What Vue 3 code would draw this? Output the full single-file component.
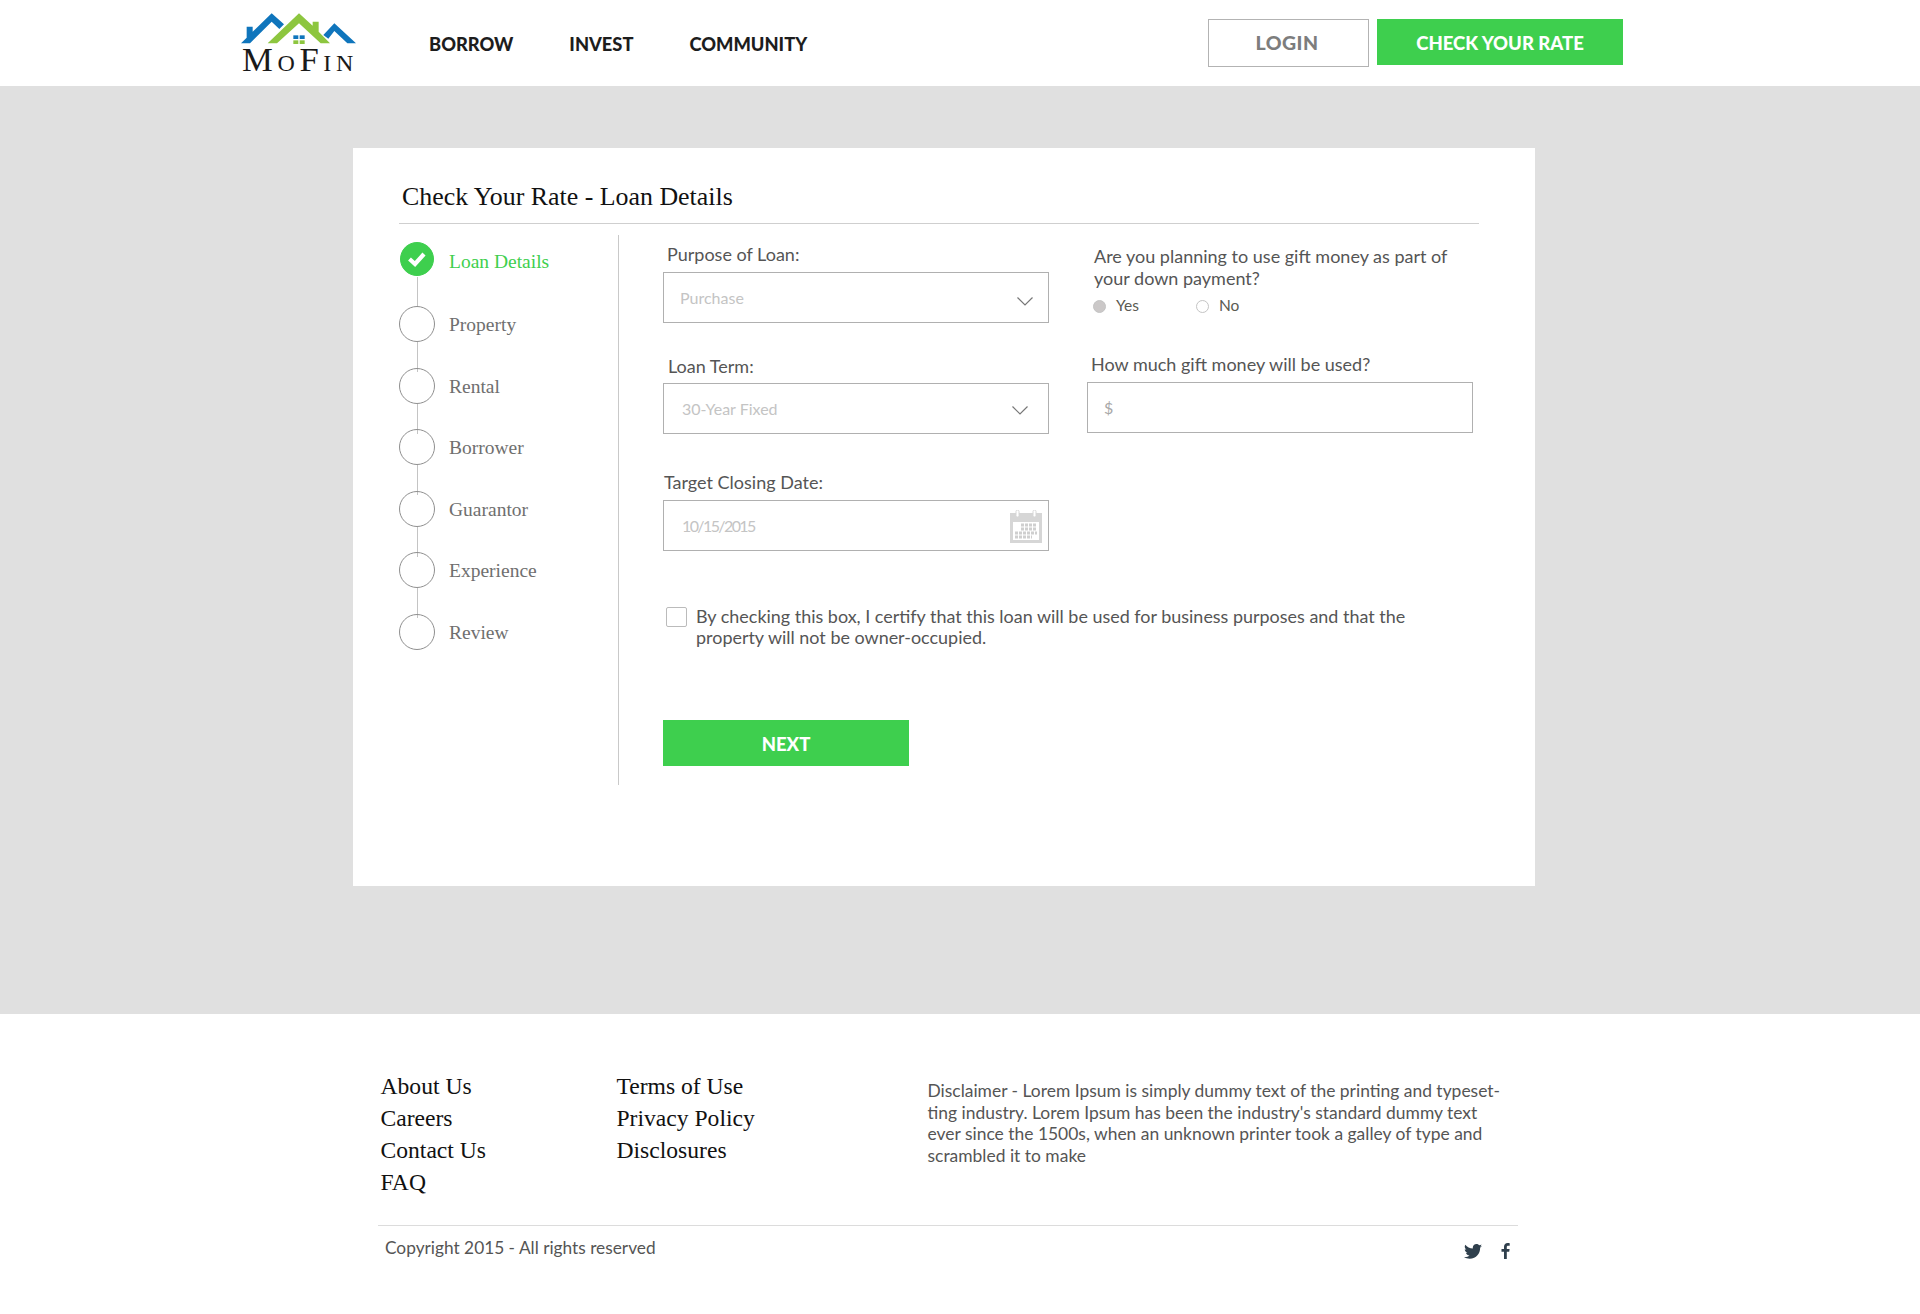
<script setup>
const nav = ['BORROW', 'INVEST', 'COMMUNITY'];

const steps = ['Loan Details', 'Property', 'Rental', 'Borrower', 'Guarantor', 'Experience', 'Review'];

const links1 = ['About Us', 'Careers', 'Contact Us', 'FAQ'];
const links2 = ['Terms of Use', 'Privacy Policy', 'Disclosures'];
</script>

<template>
  <div class="page">
    <header class="top">
      <a class="logo">
        <svg width="140" height="75" viewBox="0 0 420 225">
          <polygon fill="#0f75bc" points="33,115 50,98 50,65 68,65 68,80 125,25 162,58 148,72 125,50 60,115" />
          <polygon fill="#8dc63f" points="113,115 207,25 248,62 248,50 266,50 266,80 300,115 272,115 207,55 141,115" />
          <polygon fill="#0f75bc" points="280,90 313,55 378,115 352,115 313,78 295,101" />
          <rect x="190" y="91" width="15" height="11" fill="#0f75bc" />
          <rect x="209" y="91" width="15" height="11" fill="#0f75bc" />
          <rect x="190" y="106" width="15" height="11" fill="#8dc63f" />
          <rect x="209" y="106" width="15" height="11" fill="#8dc63f" />
          <text x="36" y="199" class="logo-text" textLength="334">MoFin</text>
        </svg>
      </a>
      <nav class="nav">
        <a v-for="item in nav" :key="item">{{ item }}</a>
      </nav>
      <div class="actions">
        <button class="login">LOGIN</button>
        <button class="rate">CHECK YOUR RATE</button>
      </div>
    </header>

    <main class="main">
      <section class="card">
        <h1>Check Your Rate - Loan Details</h1>
        <div class="content">
          <ol class="steps">
            <li v-for="(step, i) in steps" :key="step" class="step" :class="{ done: i === 0 }">
              <span class="dot">
                <svg v-if="i === 0" width="18" height="16" viewBox="0 0 18 16">
                  <path d="M1.500 8 L7 13 L16 3" fill="none" stroke="#fff" stroke-width="4.200" />
                </svg>
              </span>
              <span class="step-name">{{ step }}</span>
            </li>
          </ol>

          <form class="form" @submit.prevent>
            <div class="columns">
              <div class="col">
                <label class="lbl l1">Purpose of Loan:</label>
                <div class="box">
                  <span class="val v1">Purchase</span>
                  <svg class="chev c1" width="16" height="9" viewBox="0 0 16 9">
                    <path d="M0.500 0.500 L8 8 L15.500 0.500" fill="none" stroke="#777" stroke-width="1.200" />
                  </svg>
                </div>

                <label class="lbl l2">Loan Term:</label>
                <div class="box">
                  <span class="val">30-Year Fixed</span>
                  <svg class="chev c2" width="16" height="9" viewBox="0 0 16 9">
                    <path d="M0.500 0.500 L8 8 L15.500 0.500" fill="none" stroke="#777" stroke-width="1.200" />
                  </svg>
                </div>

                <label class="lbl l3">Target Closing Date:</label>
                <div class="box">
                  <span class="val date">10/15/2015</span>
                  <svg class="cal" width="32" height="33" viewBox="0 0 32 33">
                    <rect x="0" y="3" width="32" height="30" fill="#d6d6d6" />
                    <rect x="3" y="12" width="26" height="18" fill="#fff" />
                    <rect x="6" y="0" width="3" height="7" rx="1.500" fill="#fff" stroke="#d6d6d6" />
                    <rect x="23" y="0" width="3" height="7" rx="1.500" fill="#fff" stroke="#d6d6d6" />
                    <path d="M11 15 H27 M11 19 H27 M5 23 H27 M5 27 H22" stroke="#cfcfcf" stroke-width="3" stroke-dasharray="3 1" />
                  </svg>
                </div>
              </div>

              <div class="col">
                <p class="question">Are you planning to use gift money as part of<br />your down payment?</p>
                <div class="radios">
                  <span class="radio on"></span><span class="radio-txt yes">Yes</span>
                  <span class="radio"></span><span class="radio-txt">No</span>
                </div>
                <label class="lbl l4">How much gift money will be used?</label>
                <div class="box">
                  <span class="val dollar">$</span>
                </div>
              </div>
            </div>

            <div class="certify">
              <span class="check"></span>
              <p>By checking this box, I certify that this loan will be used for business purposes and that the<br />property will not be owner-occupied.</p>
            </div>

            <button class="next" type="submit">NEXT</button>
          </form>
        </div>
      </section>
    </main>

    <footer class="foot">
      <div class="foot-top">
        <ul class="links">
          <li v-for="l in links1" :key="l">{{ l }}</li>
        </ul>
        <ul class="links second">
          <li v-for="l in links2" :key="l">{{ l }}</li>
        </ul>
        <p class="disclaimer">
          Disclaimer - Lorem Ipsum is simply dummy text of the printing and typeset-<br />
          ting industry. Lorem Ipsum has been the industry's standard dummy text<br />
          ever since the 1500s, when an unknown printer took a galley of type and<br />
          scrambled it to make
        </p>
      </div>
      <div class="foot-bottom">
        <span class="copy">Copyright 2015 - All rights reserved</span>
        <div class="social">
          <svg width="18" height="15" viewBox="0 0 24 20">
            <path fill="#2f3f4c" d="M24 2.400c-.9.4-1.800.7-2.800.8 1-.6 1.800-1.600 2.200-2.700-1 .6-2 1-3.100 1.200C19.300.7 18 0 16.600 0c-2.700 0-4.900 2.200-4.900 4.900 0 .4 0 .8.1 1.100C7.700 5.800 4.100 3.900 1.700.9c-.4.7-.7 1.600-.7 2.500 0 1.700.9 3.200 2.200 4.100-.8 0-1.600-.2-2.200-.6v.1c0 2.400 1.700 4.400 3.900 4.800-.4.1-.8.2-1.300.2-.3 0-.6 0-.9-.1.6 2 2.400 3.400 4.600 3.400-1.700 1.300-3.800 2.100-6.100 2.100-.4 0-.8 0-1.200-.1C2.200 18.700 4.800 19.500 7.500 19.500c9.100 0 14-7.500 14-14v-.6c1-.7 1.800-1.600 2.500-2.500z" />
          </svg>
          <svg width="9" height="16" viewBox="0 0 9 16">
            <path fill="#2f3f4c" d="M5.800 16V8.800h2.400l.4-2.800H5.800V4.200c0-.8.2-1.400 1.400-1.400h1.500V.3C8.400.2 7.600 0 6.700 0 4.500 0 3 1.300 3 3.800V6H.5v2.800H3V16z" />
          </svg>
        </div>
      </div>
    </footer>
  </div>
</template>

<style>
body {
  background: #fff;
}
</style>

<style scoped>
.page {
  font-family: Lato, "Open Sans", sans-serif;
  color: #555;
  width: 1920px;
  height: 1314px;
  overflow: hidden;
}

.top {
  height: 86px;
  display: flex;
  align-items: flex-start;
  padding-left: 230px;
  padding-right: 297px;
  box-sizing: border-box;
}

.logo {
  margin-top: 5px;
  line-height: 0;
}

.logo-text {
  font-family: "Liberation Serif", serif;
  font-size: 104px;
  font-variant: small-caps;
  fill: #1a1a1a;
}

.nav {
  display: flex;
  gap: 56px;
  margin-left: 59px;
  margin-top: 33px;
  font-weight: 900;
  font-size: 18.300px;
  line-height: 22px;
  color: #1d1d1d;
}

.actions {
  margin-left: auto;
  display: flex;
  align-items: flex-start;
  gap: 8px;
  margin-top: 19px;
}

button {
  font-family: inherit;
  cursor: pointer;
}

.login {
  width: 161px;
  height: 48px;
  background: #fff;
  border: 1px solid #b3b3b3;
  color: #7d7d7d;
  font-weight: 900;
  font-size: 19.500px;
  letter-spacing: 0.500px;
  padding: 0 3px 2px 0;
}

.rate {
  width: 246px;
  height: 46px;
  background: #3ecf4e;
  border: 0;
  color: #fff;
  font-weight: 900;
  font-size: 18.500px;
  padding: 2px 0 0;
}

.main {
  background: #e0e0e0;
  height: 928px;
  padding: 62px 0 0 353px;
  box-sizing: border-box;
}

.card {
  width: 1182px;
  height: 738px;
  background: #fff;
  padding: 34px 56px 0 46px;
  box-sizing: border-box;
}

h1 {
  margin: 0 0 0 3px;
  font-family: "Liberation Serif", serif;
  font-weight: 400;
  font-size: 25.900px;
  line-height: 30px;
  color: #111;
}

.content {
  display: flex;
  align-items: flex-start;
  border-top: 1px solid #cfcfcf;
  margin-top: 11px;
  padding-top: 11px;
}

.steps {
  list-style: none;
  margin: 0;
  padding: 6px 0 0;
  width: 219px;
  flex: none;
  box-sizing: border-box;
}

.step {
  position: relative;
  display: flex;
  align-items: flex-start;
  height: 61.500px;
}

.step.done {
  height: 65px;
}

.step:not(:last-child)::after {
  content: "";
  position: absolute;
  left: 18px;
  top: 36px;
  width: 1px;
  height: 30px;
  background: #c4c4c4;
}

.dot {
  width: 36px;
  height: 36px;
  box-sizing: border-box;
  border: 1px solid #8f8f8f;
  border-radius: 50%;
  display: flex;
  align-items: center;
  justify-content: center;
  flex: none;
}

.done .dot {
  width: 34px;
  height: 34px;
  margin: 1px;
  background: #3ecf4e;
  border-color: #3ecf4e;
}

.step-name {
  font-family: "Liberation Serif", serif;
  font-size: 19.500px;
  line-height: 38px;
  color: #6f6f6f;
  margin-left: 14px;
}

.done .step-name {
  color: #3ecf4e;
  line-height: 41px;
}

.form {
  border-left: 1px solid #c9c9c9;
  padding-left: 44px;
  height: 550px;
  flex: 1;
  box-sizing: border-box;
}

.columns {
  display: flex;
  gap: 38px;
}

.col {
  width: 386px;
  flex: none;
}

.lbl {
  display: block;
  font-size: 18px;
  line-height: 20px;
}

.l1 {
  margin: 9px 0 8px 4px;
}

.l2 {
  margin: 33px 0 7px 5px;
}

.l3 {
  margin: 38px 0 8px 1px;
}

.l4 {
  margin: 38px 0 8px 4px;
}

.box {
  position: relative;
  height: 51px;
  border: 1px solid #b0b0b0;
  box-sizing: border-box;
  display: flex;
  align-items: center;
}

.val {
  color: #c4c4c4;
  font-size: 16px;
  padding-left: 18px;
}

.v1 {
  padding-left: 16px;
}

.date {
  letter-spacing: -1.600px;
}

.dollar {
  color: #a8a8a8;
  padding-left: 16px;
}

.chev {
  position: absolute;
  top: 22px;
}

.c1 {
  right: 15px;
  top: 24px;
}

.c2 {
  right: 20px;
}

.cal {
  position: absolute;
  right: 6px;
  top: 9px;
}

.question {
  margin: 10px 0 0 7px;
  font-size: 18px;
  line-height: 22px;
}

.radios {
  display: flex;
  align-items: center;
  margin: 5px 0 0 6px;
  font-size: 15.500px;
  line-height: 22px;
}

.radio {
  width: 13px;
  height: 13px;
  border: 1px solid #c4c4c4;
  border-radius: 50%;
  box-sizing: border-box;
  margin-top: 2px;
}

.radio.on {
  background: #cbc8c8;
}

.radio-txt {
  margin-left: 10px;
  color: #5a5a52;
}

.yes {
  width: 80px;
}

.certify {
  display: flex;
  margin: 55px 0 0 3px;
}

.check {
  width: 21px;
  height: 20px;
  border: 1px solid #bbb;
  border-radius: 2px;
  box-sizing: border-box;
  flex: none;
  margin-top: 1px;
}

.certify p {
  margin: 0 0 0 9px;
  font-size: 17.950px;
  line-height: 21px;
}

.next {
  display: block;
  margin-top: 72px;
  width: 246px;
  height: 46px;
  background: #3ecf4e;
  border: 0;
  color: #fff;
  font-weight: 900;
  font-size: 18.500px;
  padding: 2px 0 0;
}

.foot {
  padding: 0 402px 0 378px;
}

.foot-top {
  display: flex;
  height: 212px;
  border-bottom: 1px solid #dcdcdc;
  padding-top: 56px;
  box-sizing: border-box;
}

.links {
  list-style: none;
  margin: 0;
  padding: 0 0 0 2.500px;
  width: 236px;
  font-family: "Liberation Serif", serif;
  font-size: 23.600px;
  line-height: 32px;
  color: #111;
}

.second {
  width: 311px;
  padding-left: 0;
}

.disclaimer {
  margin: 10px 0 0;
  font-size: 17.450px;
  line-height: 21.600px;
  white-space: nowrap;
}

.foot-bottom {
  display: flex;
  justify-content: space-between;
  padding: 11px 8px 0 7px;
}

.copy {
  font-size: 17.300px;
  line-height: 22px;
}

.social {
  display: flex;
  align-items: center;
  gap: 19px;
  margin-top: 6px;
}
</style>
